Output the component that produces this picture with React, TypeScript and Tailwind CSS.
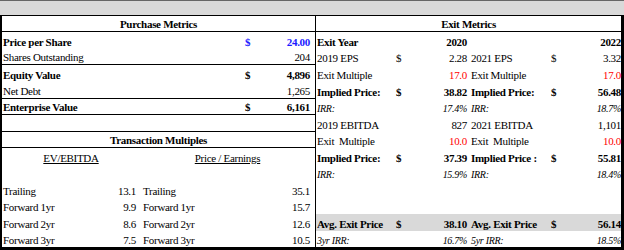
import React from "react";

// one cell row on the left: label, "$", value
function LeftRow({
  h,
  label,
  cur,
  value,
  line,
  bold,
  blue,
}: {
  h: string;
  label?: string;
  cur?: string;
  value?: string;
  line?: boolean;
  bold?: boolean;
  blue?: boolean;
}) {
  return (
    <div className={`flex items-end pb-[1px] ${h} ${line ? "border-b border-black" : ""} ${bold ? "font-bold" : ""}`}>
      <span className="w-[238px] pl-[1px] whitespace-pre">{label}</span>
      <span className={`w-[20px] pl-[5px] ${blue ? "text-[#1a1aff]" : ""}`}>{cur}</span>
      <span className={`flex-1 text-right pr-[5px] ${blue ? "text-[#1a1aff]" : ""}`}>{value}</span>
    </div>
  );
}

function MultRow({ h, label, a, b }: { h: string; label: string; a: string; b: string }) {
  return (
    <div className={`flex items-end pb-[1px] ${h}`}>
      <div className="w-[138px] flex justify-between pl-[1px] pr-[4px]">
        <span>{label}</span>
        <span>{a}</span>
      </div>
      <div className="flex-1 flex justify-between pl-[3px] pr-[5px]">
        <span>{label}</span>
        <span>{b}</span>
      </div>
    </div>
  );
}

type Side = { label?: string; cur?: string; value?: string };

// a row of the exit metrics: two label / $ / value groups
function ExitRow({
  h,
  l,
  r,
  bold,
  italic,
  red,
  gray,
}: {
  h: string;
  l: Side;
  r: Side;
  bold?: boolean;
  italic?: boolean;
  red?: boolean;
  gray?: boolean;
}) {
  const valCls = red ? "text-[#ff0000]" : "";
  return (
    <div
      className={`flex items-end pb-[1px] ${h} ${bold ? "font-bold" : ""} ${
        italic ? "italic text-[10px]" : ""
      } ${gray ? "bg-[#d9d9d9]" : ""}`}
    >
      <span className="w-[76px] pl-[1px] whitespace-pre">{l.label}</span>
      <span className="w-[18px] pl-[4px]">{l.cur}</span>
      <span className={`w-[59px] text-right pr-[2px] ${valCls}`}>{l.value}</span>
      <span className="w-[79px] pl-[2px] whitespace-pre">{r.label}</span>
      <span className="w-[18px] pl-[3px]">{r.cur}</span>
      <span className={`flex-1 text-right whitespace-nowrap ${valCls}`}>{r.value}</span>
    </div>
  );
}

export default function App() {
  return (
    <div
      className="w-[624px] h-[250px] bg-white text-black text-[11px] leading-none tracking-[-0.3px] overflow-hidden"
      style={{ fontFamily: '"Liberation Serif", "Times New Roman", serif' }}
    >
      <div className="h-[16px] bg-[#d9d9d9] border-t border-t-[#666] border-b border-b-black" />

      <div className="flex h-[234px] border-l-2 border-r-[3px] border-b-[3px] border-black">
        {/* Purchase metrics + transaction multiples */}
        <div className="w-[314px] border-r border-black flex flex-col">
          <div className="h-[16px] flex items-end justify-center pb-[1px] font-bold border-b border-black">
            Purchase Metrics
          </div>
          <LeftRow h="h-[17px]" label="Price per Share" cur="$" value="24.00" bold blue />
          <LeftRow h="h-[16px]" label="Shares Outstanding" value="204" line />
          <LeftRow h="h-[17px]" label="Equity Value" cur="$" value="4,896" bold />
          <LeftRow h="h-[17px]" label="Net Debt" value="1,265" line />
          <LeftRow h="h-[16px]" label="Enterprise Value" cur="$" value="6,161" bold line />
          <div className="h-[17px] border-b border-black" />
          <div className="h-[16px] flex items-end justify-center pb-[1px] font-bold border-b border-black">
            Transaction Multiples
          </div>
          <div className="h-[17px] flex items-end pb-[1px]">
            <span className="w-[138px] text-center underline">EV/EBITDA</span>
            <span className="flex-1 text-center underline">Price / Earnings</span>
          </div>
          <div className="h-[16px]" />
          <MultRow h="h-[17px]" label="Trailing" a="13.1" b="35.1" />
          <MultRow h="h-[16px]" label="Forward 1yr" a="9.9" b="15.7" />
          <MultRow h="h-[17px]" label="Forward 2yr" a="8.6" b="12.6" />
          <MultRow h="h-[16px]" label="Forward 3yr" a="7.5" b="10.5" />
        </div>

        {/* Exit metrics */}
        <div className="flex-1 flex flex-col">
          <div className="h-[16px] flex items-end justify-center pb-[1px] font-bold border-b border-black">
            Exit Metrics
          </div>
          <ExitRow h="h-[17px]" bold l={{ label: "Exit Year", value: "2020" }} r={{ value: "2022" }} />
          <ExitRow h="h-[16px]" l={{ label: "2019 EPS", cur: "$", value: "2.28" }} r={{ label: "2021 EPS", cur: "$", value: "3.32" }} />
          <ExitRow h="h-[17px]" red l={{ label: "Exit Multiple", value: "17.0" }} r={{ label: "Exit Multiple", value: "17.0" }} />
          <ExitRow h="h-[17px]" bold l={{ label: "Implied Price:", cur: "$", value: "38.82" }} r={{ label: "Implied Price:", cur: "$", value: "56.48" }} />
          <ExitRow h="h-[16px]" italic l={{ label: "IRR:", value: "17.4%" }} r={{ label: "IRR:", value: "18.7%" }} />
          <ExitRow h="h-[17px]" l={{ label: "2019 EBITDA", value: "827" }} r={{ label: "2021 EBITDA", value: "1,101" }} />
          <ExitRow h="h-[16px]" red l={{ label: "Exit  Multiple", value: "10.0" }} r={{ label: "Exit  Multiple", value: "10.0" }} />
          <ExitRow h="h-[17px]" bold l={{ label: "Implied Price:", cur: "$", value: "37.39" }} r={{ label: "Implied Price :", cur: "$", value: "55.81" }} />
          <ExitRow h="h-[16px]" italic l={{ label: "IRR:", value: "15.9%" }} r={{ label: "IRR:", value: "18.4%" }} />
          <div className="h-[17px]" />
          <div className="h-[16px]" />
          <ExitRow h="h-[17px]" bold gray l={{ label: "Avg. Exit Price", cur: "$", value: "38.10" }} r={{ label: "Avg. Exit Price", cur: "$", value: "56.14" }} />
          <ExitRow h="h-[16px]" italic l={{ label: "3yr IRR:", value: "16.7%" }} r={{ label: "5yr IRR:", value: "18.5%" }} />
        </div>
      </div>
    </div>
  );
}
